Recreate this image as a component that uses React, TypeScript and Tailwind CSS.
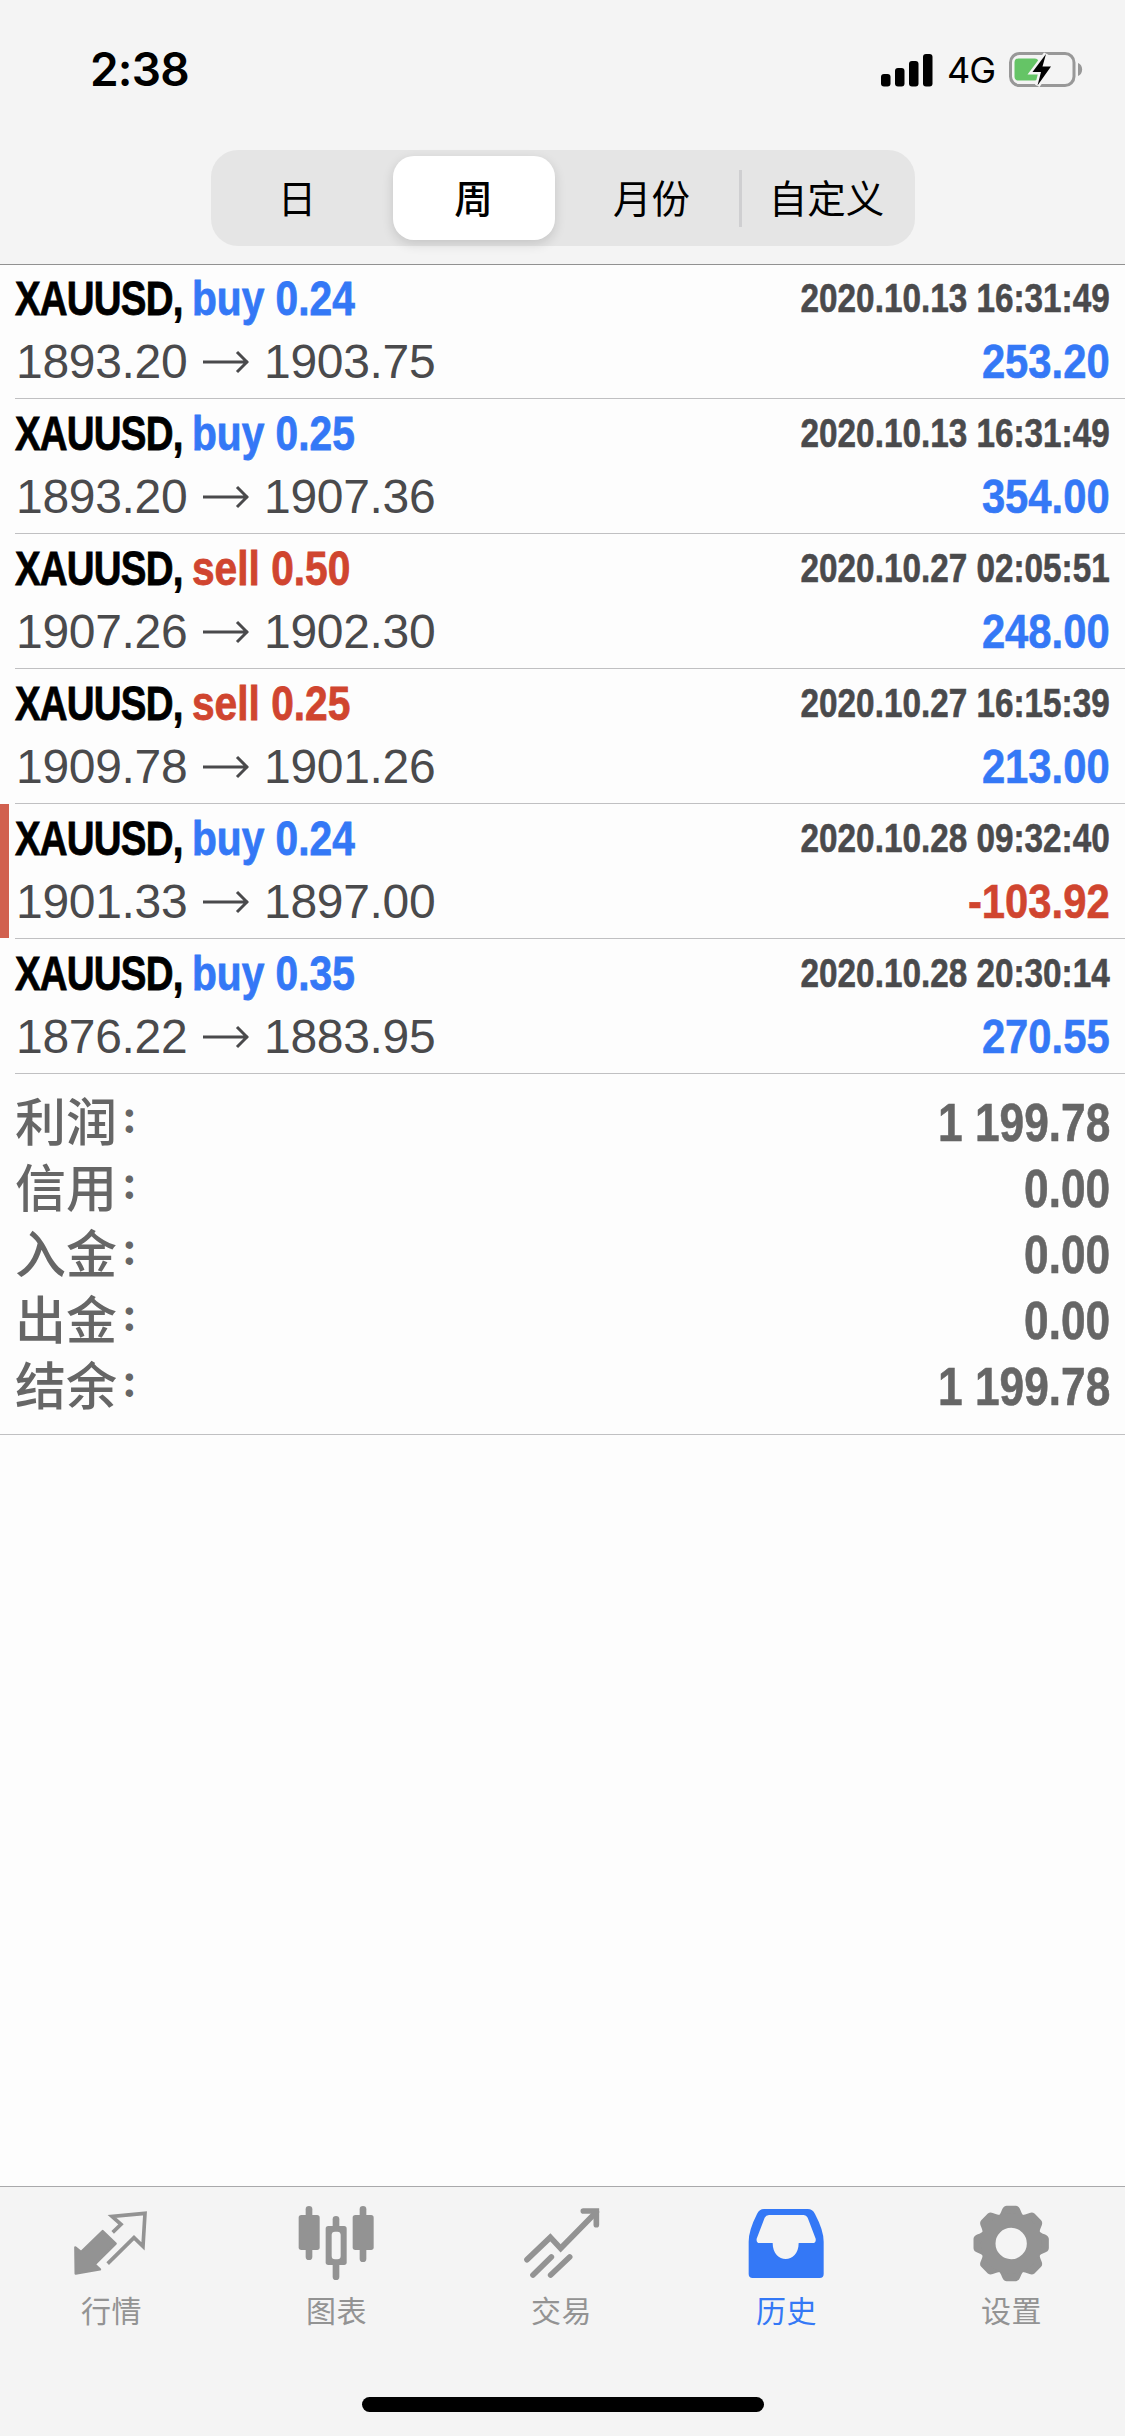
import React from "react";

type Side = "buy" | "sell";

interface Deal {
  side: Side;
  volume: string;
  open: string;
  close: string;
  time: string;
  profit: string;
  marked?: boolean;
}

const deals: Deal[] = [
  { side: "buy", volume: "0.24", open: "1893.20", close: "1903.75", time: "2020.10.13 16:31:49", profit: "253.20" },
  { side: "buy", volume: "0.25", open: "1893.20", close: "1907.36", time: "2020.10.13 16:31:49", profit: "354.00" },
  { side: "sell", volume: "0.50", open: "1907.26", close: "1902.30", time: "2020.10.27 02:05:51", profit: "248.00" },
  { side: "sell", volume: "0.25", open: "1909.78", close: "1901.26", time: "2020.10.27 16:15:39", profit: "213.00" },
  { side: "buy", volume: "0.24", open: "1901.33", close: "1897.00", time: "2020.10.28 09:32:40", profit: "-103.92", marked: true },
  { side: "buy", volume: "0.35", open: "1876.22", close: "1883.95", time: "2020.10.28 20:30:14", profit: "270.55" },
];

const summary = [
  { label: "利润", value: "1 199.78" },
  { label: "信用", value: "0.00" },
  { label: "入金", value: "0.00" },
  { label: "出金", value: "0.00" },
  { label: "结余", value: "1 199.78" },
];

const StatusBar = () => (
  <div className="flex h-[150px] items-start justify-between pt-[42px] pr-[42px] pl-[90px]">
    <span className="font-['Inter',sans-serif] text-[46px] leading-[54px] font-semibold tracking-[-0.8px]">2:38</span>
    <div className="flex items-center pt-[10px]">
      <svg width="52" height="34" viewBox="0 0 52 34">
        <rect x="0" y="21" width="9.5" height="12.5" rx="3" />
        <rect x="14" y="15" width="9.5" height="18.5" rx="3" />
        <rect x="28" y="8" width="9.5" height="25.5" rx="3" />
        <rect x="42" y="1" width="9.5" height="32.5" rx="3" />
      </svg>
      <span className="ml-[14px] font-['Inter',sans-serif] text-[36px] leading-[34px] tracking-[-1px]">4G</span>
      <svg className="ml-[14px]" width="74" height="36" viewBox="0 0 74 36">
        <rect x="1.5" y="1.5" width="63.5" height="32" rx="9" fill="none" stroke="#989898" strokeWidth="3" />
        <path d="M69 11c5.500 2 5.500 11 0 13z" fill="#989898" />
        <rect x="5.500" y="6.500" width="24" height="22" rx="4" fill="#65c466" />
        <path
          d="M37 2L23.500 20H32L28.500 33.500L42 14.500H33.500Z"
          stroke="#f4f4f4"
          strokeWidth="5"
          paintOrder="stroke"
        />
      </svg>
    </div>
  </div>
);

const PeriodTabs = () => (
  <div className="mx-auto flex h-24 w-[704px] items-center rounded-[27px] bg-[#e5e5e5] font-['Noto_Sans_CJK_SC',sans-serif] text-[38.5px] leading-none">
    <button className="w-44 pr-[3px] pb-[3px] text-center">日</button>
    <div className="flex w-44 pl-[6px]">
      <button className="h-[84px] w-[162px] rounded-[21px] bg-white pb-[3px] font-medium shadow-[0_4px_12px_rgba(0,0,0,0.14)]">
        周
      </button>
    </div>
    <button className="w-44 pb-[3px] pl-[2px] text-center">月份</button>
    <span className="h-[57px] w-[3px] bg-[#cfcfd1]" />
    <button className="w-[173px] pr-[3px] pb-[3px] text-center">自定义</button>
  </div>
);

const Arrow = () => (
  <svg width="46" height="24" viewBox="0 0 46 24" fill="none" stroke="#4a4a4c" strokeWidth="3">
    <path d="M0 12h45M34 2l10 10-10 10" />
  </svg>
);

const DealRow = ({ deal }: { deal: Deal }) => (
  <div className="relative ml-[15px] flex h-[135px] justify-between border-b border-[#c0c0c2] pr-[15px]">
    {deal.marked && <span className="absolute top-0 -left-[15px] h-[134px] w-[9px] bg-[#d1604f]" />}
    <div>
      <div className="mt-[7px] flex h-14 items-center font-['Liberation_Sans',sans-serif] text-[49px] font-bold whitespace-nowrap [-webkit-text-stroke:0.8px_currentColor]">
        <span className="w-[177px] origin-left scale-x-[0.785] tracking-[-1px]">XAUUSD,</span>
        <span
          className={`origin-left scale-x-[0.83] ${deal.side === "buy" ? "text-[#3478f6]" : "text-[#d0452f]"}`}
        >
          {deal.side} {deal.volume}
        </span>
      </div>
      <div className="mt-[7px] flex h-14 items-center pl-px font-['Liberation_Sans',sans-serif] text-[48px] tracking-[-0.3px] text-[#4a4a4c]">
        <span className="w-[187px]">{deal.open}</span>
        <Arrow />
        <span className="ml-[15px]">{deal.close}</span>
      </div>
    </div>
    <div className="font-['Liberation_Sans',sans-serif] font-bold [-webkit-text-stroke:0.6px_currentColor]">
      <div className="mt-[7px] flex h-14 origin-right scale-x-[0.812] items-center justify-end text-[41px] text-[#4a4a4c]">
        {deal.time}
      </div>
      <div
        className={`mt-[7px] flex h-14 origin-right scale-x-[0.853] items-center justify-end text-[49px] ${
          deal.profit.startsWith("-") ? "text-[#d0452f]" : "text-[#3478f6]"
        }`}
      >
        {deal.profit}
      </div>
    </div>
  </div>
);

const QuotesIcon = () => (
  <svg width="80" height="80" viewBox="0 0 240 240">
    <path
      d="M10 133l17 14 65-63 39 38-63 62 16 15-73 13z"
      fill="currentColor"
      stroke="currentColor"
      strokeWidth="7"
      strokeLinejoin="round"
    />
    <path d="M122 88l25-24-27-24 99-9-6 99-27-26-79 78" fill="none" stroke="currentColor" strokeWidth="11" />
  </svg>
);

const ChartIcon = () => (
  <svg width="80" height="80" viewBox="0 0 240 240" fill="currentColor">
    <rect x="26" y="9" width="20" height="162" rx="10" />
    <rect x="5" y="36" width="63" height="105" rx="8" />
    <rect x="107" y="39" width="20" height="192" rx="10" />
    <rect x="86" y="69" width="63" height="117" rx="8" />
    <rect x="104" y="86" width="27" height="83" rx="10" fill="#f4f4f4" />
    <rect x="188" y="9" width="20" height="168" rx="10" />
    <rect x="167" y="36" width="63" height="105" rx="8" />
  </svg>
);

const TradeIcon = () => (
  <svg
    width="80"
    height="80"
    viewBox="0 0 240 240"
    fill="none"
    stroke="currentColor"
    strokeWidth="17"
    strokeLinecap="round"
  >
    <path d="M15 170l70-67 31 33L223 27" />
    <path d="M184 24h39v41M33 216l55-54M86 216l57-54" />
  </svg>
);

const HistoryIcon = () => (
  <svg width="80" height="80" viewBox="0 0 240 240" fill="currentColor">
    <path
      fillRule="evenodd"
      d="M51 18H182Q197 18 204 33Q230 82 230 116V213Q230 225 218 225H17Q5 225 5 213V116Q5 82 30 33Q37 18 51 18ZM66 36Q57 36 53 44L29 107Q27 120 38 120H77C77 184 155 184 155 120H197Q208 120 206 107L182 44Q178 36 170 36Z"
    />
  </svg>
);

const SettingsIcon = () => (
  <svg width="80" height="80" viewBox="0 0 240 240" fill="currentColor">
    <g transform="translate(117.5 121.5)">
      {[0, 45, 90, 135, 180, 225, 270, 315].map((angle) => (
        <path
          key={angle}
          transform={`rotate(${angle})`}
          d="M-40-82C-26-90-30-112-14-113H14C30-112 26-90 40-82Z"
        />
      ))}
      <circle r="69" fill="none" stroke="currentColor" strokeWidth="44" />
    </g>
  </svg>
);

const tabs = [
  { label: "行情", Icon: QuotesIcon },
  { label: "图表", Icon: ChartIcon },
  { label: "交易", Icon: TradeIcon },
  { label: "历史", Icon: HistoryIcon, active: true },
  { label: "设置", Icon: SettingsIcon },
];

const TabBar = () => (
  <nav className="flex h-[250px] flex-col border-t border-[#a9a9ab] bg-[#f4f4f4]">
    <div className="flex pt-4">
      {tabs.map(({ label, Icon, active }) => (
        <button
          key={label}
          className={`flex w-[225px] flex-col items-center pr-[2px] ${active ? "text-[#3478f6]" : "text-[#939393]"}`}
        >
          <Icon />
          <span className="mt-[6px] font-['Noto_Sans_CJK_SC',sans-serif] text-[30px] leading-10 tracking-[0.5px]">
            {label}
          </span>
        </button>
      ))}
    </div>
    <div className="mx-auto mt-auto mb-6 h-[15px] w-[402px] rounded-full bg-black" />
  </nav>
);

export default function App() {
  return (
    <div className="flex h-[2436px] w-[1125px] flex-col bg-[#fdfdfd] text-black">
      <header className="h-[265px] border-b border-[#919191] bg-[#f4f4f4]">
        <StatusBar />
        <PeriodTabs />
      </header>

      <main className="-mt-px flex-1">
        {deals.map((deal, index) => (
          <DealRow key={index} deal={deal} />
        ))}
        <div className="h-[361px] border-b border-[#c0c0c2] pt-[16px] pr-[15px] pl-[15px] text-[#666]">
          {summary.map((item) => (
            <div key={item.label} className="flex h-[66px] items-center justify-between">
              <div className="flex items-center leading-none font-medium">
                <span className="font-['Liberation_Sans','Noto_Sans_CJK_SC',sans-serif] text-[51px]">{item.label}</span>
                <span className="ml-[5px] pb-[12px] font-['Inter',sans-serif] text-[44px] font-bold">:</span>
              </div>
              <span className="origin-right scale-x-[0.835] pb-[2px] font-['Liberation_Sans',sans-serif] text-[53px] leading-none font-bold [-webkit-text-stroke:0.6px_currentColor]">
                {item.value}
              </span>
            </div>
          ))}
        </div>
      </main>

      <TabBar />
    </div>
  );
}
